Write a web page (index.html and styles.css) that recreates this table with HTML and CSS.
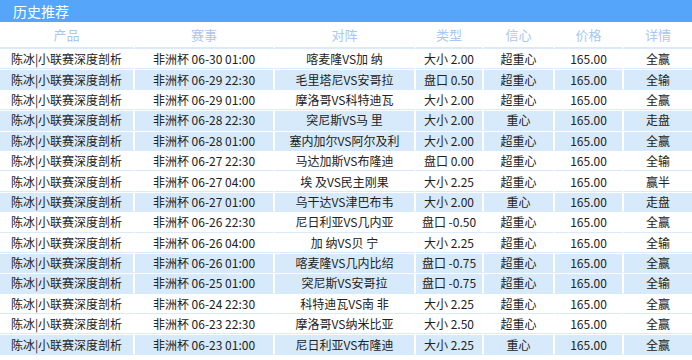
FILE: index.html
```html
<!DOCTYPE html>
<html lang="zh-CN">
<head>
<meta charset="utf-8">
<title>历史推荐</title>
<link rel="stylesheet" href="styles.css">
</head>
<body>
<div class="panel">
  <div class="title">历史推荐</div>
  <table class="grid">
    <colgroup>
      <col class="c1"><col class="c2"><col class="c3"><col class="c4"><col class="c5"><col class="c6"><col class="c7">
    </colgroup>
    <thead>
      <tr><th>产品</th><th>赛事</th><th>对阵</th><th>类型</th><th>信心</th><th>价格</th><th>详情</th></tr>
    </thead>
    <tbody>
      <tr><td>陈冰|小联赛深度剖析</td><td>非洲杯 06-30 01:00</td><td>喀麦隆VS加 纳</td><td>大小 2.00</td><td>超重心</td><td>165.00</td><td>全赢</td></tr>
      <tr class="alt"><td>陈冰|小联赛深度剖析</td><td>非洲杯 06-29 22:30</td><td>毛里塔尼VS安哥拉</td><td>盘口 0.50</td><td>超重心</td><td>165.00</td><td>全输</td></tr>
      <tr><td>陈冰|小联赛深度剖析</td><td>非洲杯 06-29 01:00</td><td>摩洛哥VS科特迪瓦</td><td>大小 2.00</td><td>超重心</td><td>165.00</td><td>全赢</td></tr>
      <tr class="alt"><td>陈冰|小联赛深度剖析</td><td>非洲杯 06-28 22:30</td><td>突尼斯VS马 里</td><td>大小 2.00</td><td>重心</td><td>165.00</td><td>走盘</td></tr>
      <tr class="alt"><td>陈冰|小联赛深度剖析</td><td>非洲杯 06-28 01:00</td><td>塞内加尔VS阿尔及利</td><td>大小 2.00</td><td>超重心</td><td>165.00</td><td>全赢</td></tr>
      <tr><td>陈冰|小联赛深度剖析</td><td>非洲杯 06-27 22:30</td><td>马达加斯VS布隆迪</td><td>盘口 0.00</td><td>超重心</td><td>165.00</td><td>全输</td></tr>
      <tr><td>陈冰|小联赛深度剖析</td><td>非洲杯 06-27 04:00</td><td>埃 及VS民主刚果</td><td>大小 2.25</td><td>超重心</td><td>165.00</td><td>赢半</td></tr>
      <tr class="alt"><td>陈冰|小联赛深度剖析</td><td>非洲杯 06-27 01:00</td><td>乌干达VS津巴布韦</td><td>大小 2.00</td><td>重心</td><td>165.00</td><td>走盘</td></tr>
      <tr><td>陈冰|小联赛深度剖析</td><td>非洲杯 06-26 22:30</td><td>尼日利亚VS几内亚</td><td>盘口 -0.50</td><td>超重心</td><td>165.00</td><td>全赢</td></tr>
      <tr><td>陈冰|小联赛深度剖析</td><td>非洲杯 06-26 04:00</td><td>加 纳VS贝 宁</td><td>大小 2.25</td><td>超重心</td><td>165.00</td><td>全输</td></tr>
      <tr class="alt"><td>陈冰|小联赛深度剖析</td><td>非洲杯 06-26 01:00</td><td>喀麦隆VS几内比绍</td><td>盘口 -0.75</td><td>超重心</td><td>165.00</td><td>全赢</td></tr>
      <tr class="alt"><td>陈冰|小联赛深度剖析</td><td>非洲杯 06-25 01:00</td><td>突尼斯VS安哥拉</td><td>盘口 -0.75</td><td>超重心</td><td>165.00</td><td>全输</td></tr>
      <tr><td>陈冰|小联赛深度剖析</td><td>非洲杯 06-24 22:30</td><td>科特迪瓦VS南 非</td><td>大小 2.25</td><td>超重心</td><td>165.00</td><td>全赢</td></tr>
      <tr><td>陈冰|小联赛深度剖析</td><td>非洲杯 06-23 22:30</td><td>摩洛哥VS纳米比亚</td><td>大小 2.50</td><td>超重心</td><td>165.00</td><td>全赢</td></tr>
      <tr class="alt"><td>陈冰|小联赛深度剖析</td><td>非洲杯 06-23 01:00</td><td>尼日利亚VS布隆迪</td><td>大小 2.25</td><td>重心</td><td>165.00</td><td>全赢</td></tr>
    </tbody>
  </table>
</div>
</body>
</html>
```

FILE: styles.css
```css
html, body {
  margin: 0;
  padding: 0;
  background: #ffffff;
}

body {
  font-family: "Noto Sans CJK SC", "Noto Sans", sans-serif;
  color: #222222;
}

.panel {
  width: 692px;
  height: 360px;
  overflow: hidden;
}

.title {
  height: 22px;
  line-height: 22px;
  background: #55a5fb;
  color: #ffffff;
  font-size: 14px;
  padding-left: 13px;
}

.grid {
  width: 692px;
  table-layout: fixed;
  border-collapse: separate;
  border-spacing: 0;
}

.c1 { width: 135px; }
.c2 { width: 140px; }
.c3 { width: 141px; }
.c4 { width: 68px; }
.c5 { width: 71px; }
.c6 { width: 69px; }
.c7 { width: 68px; }

.grid th {
  height: 25px;
  padding: 0;
  font-weight: normal;
  font-size: 13px;
  color: #a6c8f3;
  text-align: center;
  border-bottom: 2px solid #dbeaf9;
  border-right: 2px solid #ffffff;
}

.grid td {
  height: 18.4px;
  padding: 0;
  font-size: 12px;
  line-height: 18px;
  text-align: center;
  white-space: nowrap;
  overflow: hidden;
  border-right: 2px solid #ffffff;
  border-top: 1px solid #ffffff;
  border-bottom: 1px solid #dbeaf9;
}

.grid th:last-child,
.grid td:last-child {
  border-right: 0;
}

.grid tr.alt td {
  background: #d7eafc;
  border-bottom-color: #d7eafc;
}
```
